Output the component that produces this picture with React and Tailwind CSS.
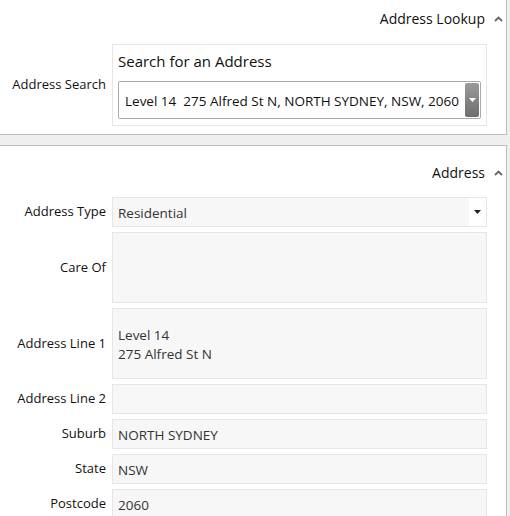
import React from 'react';

function ChevronUp() {
  return (
    <svg width="9" height="6" viewBox="0 0 9 6" className="ml-[9px]">
      <path d="M1 5 L4.5 1.5 L8 5" fill="none" stroke="#666" strokeWidth="1.8" />
    </svg>
  );
}

function SectionHeader({ title }) {
  return (
    <div className="flex items-center justify-end pr-[3px]">
      <span className="text-[14px] text-[#111]">{title}</span>
      <ChevronUp />
    </div>
  );
}

function Field({ label, value, tall, select }) {
  return (
    <div className="flex items-center">
      <div className="w-[112px] shrink-0 pr-[6px] text-right text-[13px] text-[#111]">{label}</div>
      <div
        className={
          'flex w-[375px] items-center border border-[#e6e6e6] bg-[#f7f7f7] text-[13.5px] text-[#333] ' +
          (tall ? 'h-[71px]' : 'h-[30px]')
        }
      >
        <div className="flex-1 pt-[3px] pl-[5px] leading-[19px]">
          {Array.isArray(value) ? value.map((line) => <div key={line}>{line}</div>) : value}
        </div>
        {select ? (
          <div className="flex h-full w-[17px] items-center justify-center bg-white">
            <svg width="7" height="4" viewBox="0 0 7 4">
              <path d="M0 0 H7 L3.5 4 Z" fill="#222" />
            </svg>
          </div>
        ) : null}
      </div>
    </div>
  );
}

export default function App() {
  return (
    <div className="h-[516px] w-[510px] overflow-hidden bg-[#efefef]" style={{ fontFamily: '"Segoe UI", "Open Sans", sans-serif' }}>
      <section className="mr-[3px] h-[135px] border-r border-b border-[#bdbdbd] bg-white pt-[8px]">
        <SectionHeader title="Address Lookup" />
        <div className="mt-[15px] flex items-center">
          <div className="w-[112px] shrink-0 pr-[6px] text-right text-[13px] text-[#111]">Address Search</div>
          <div className="w-[375px] border border-[#e6e6e6] px-[5px] pt-[6px] pb-[6px]">
            <div className="mb-[10px] text-[15px] leading-[20px] text-[#111]">Search for an Address</div>
            <div className="flex h-[38px] items-center rounded-[2px] border border-[#a9a9a9] bg-white pl-[6px] pr-[1px]">
              <span className="flex-1 whitespace-pre pt-[2px] text-[13.5px] text-[#111]">Level 14  275 Alfred St N, NORTH SYDNEY, NSW, 2060</span>
              <div className="flex h-[34px] w-[14px] items-center justify-center rounded-[2px] bg-gradient-to-b from-[#9a9a9a] to-[#6e6e6e]">
                <svg width="7" height="4" viewBox="0 0 7 4">
                  <path d="M0 0 H7 L3.5 4 Z" fill="#fff" />
                </svg>
              </div>
            </div>
          </div>
        </div>
      </section>

      <section className="mt-[10px] mr-[3px] h-[380px] border-t border-r border-[#bdbdbd] bg-white pt-[16px]">
        <SectionHeader title="Address" />
        <div className="mt-[14px] flex flex-col gap-[5px]">
          <Field label="Address Type" value="Residential" select />
          <Field label="Care Of" value="" tall />
          <Field label="Address Line 1" value={['Level 14', '275 Alfred St N']} tall />
          <Field label="Address Line 2" value="" />
          <Field label="Suburb" value="NORTH SYDNEY" />
          <Field label="State" value="NSW" />
          <Field label="Postcode" value="2060" />
        </div>
      </section>
    </div>
  );
}
